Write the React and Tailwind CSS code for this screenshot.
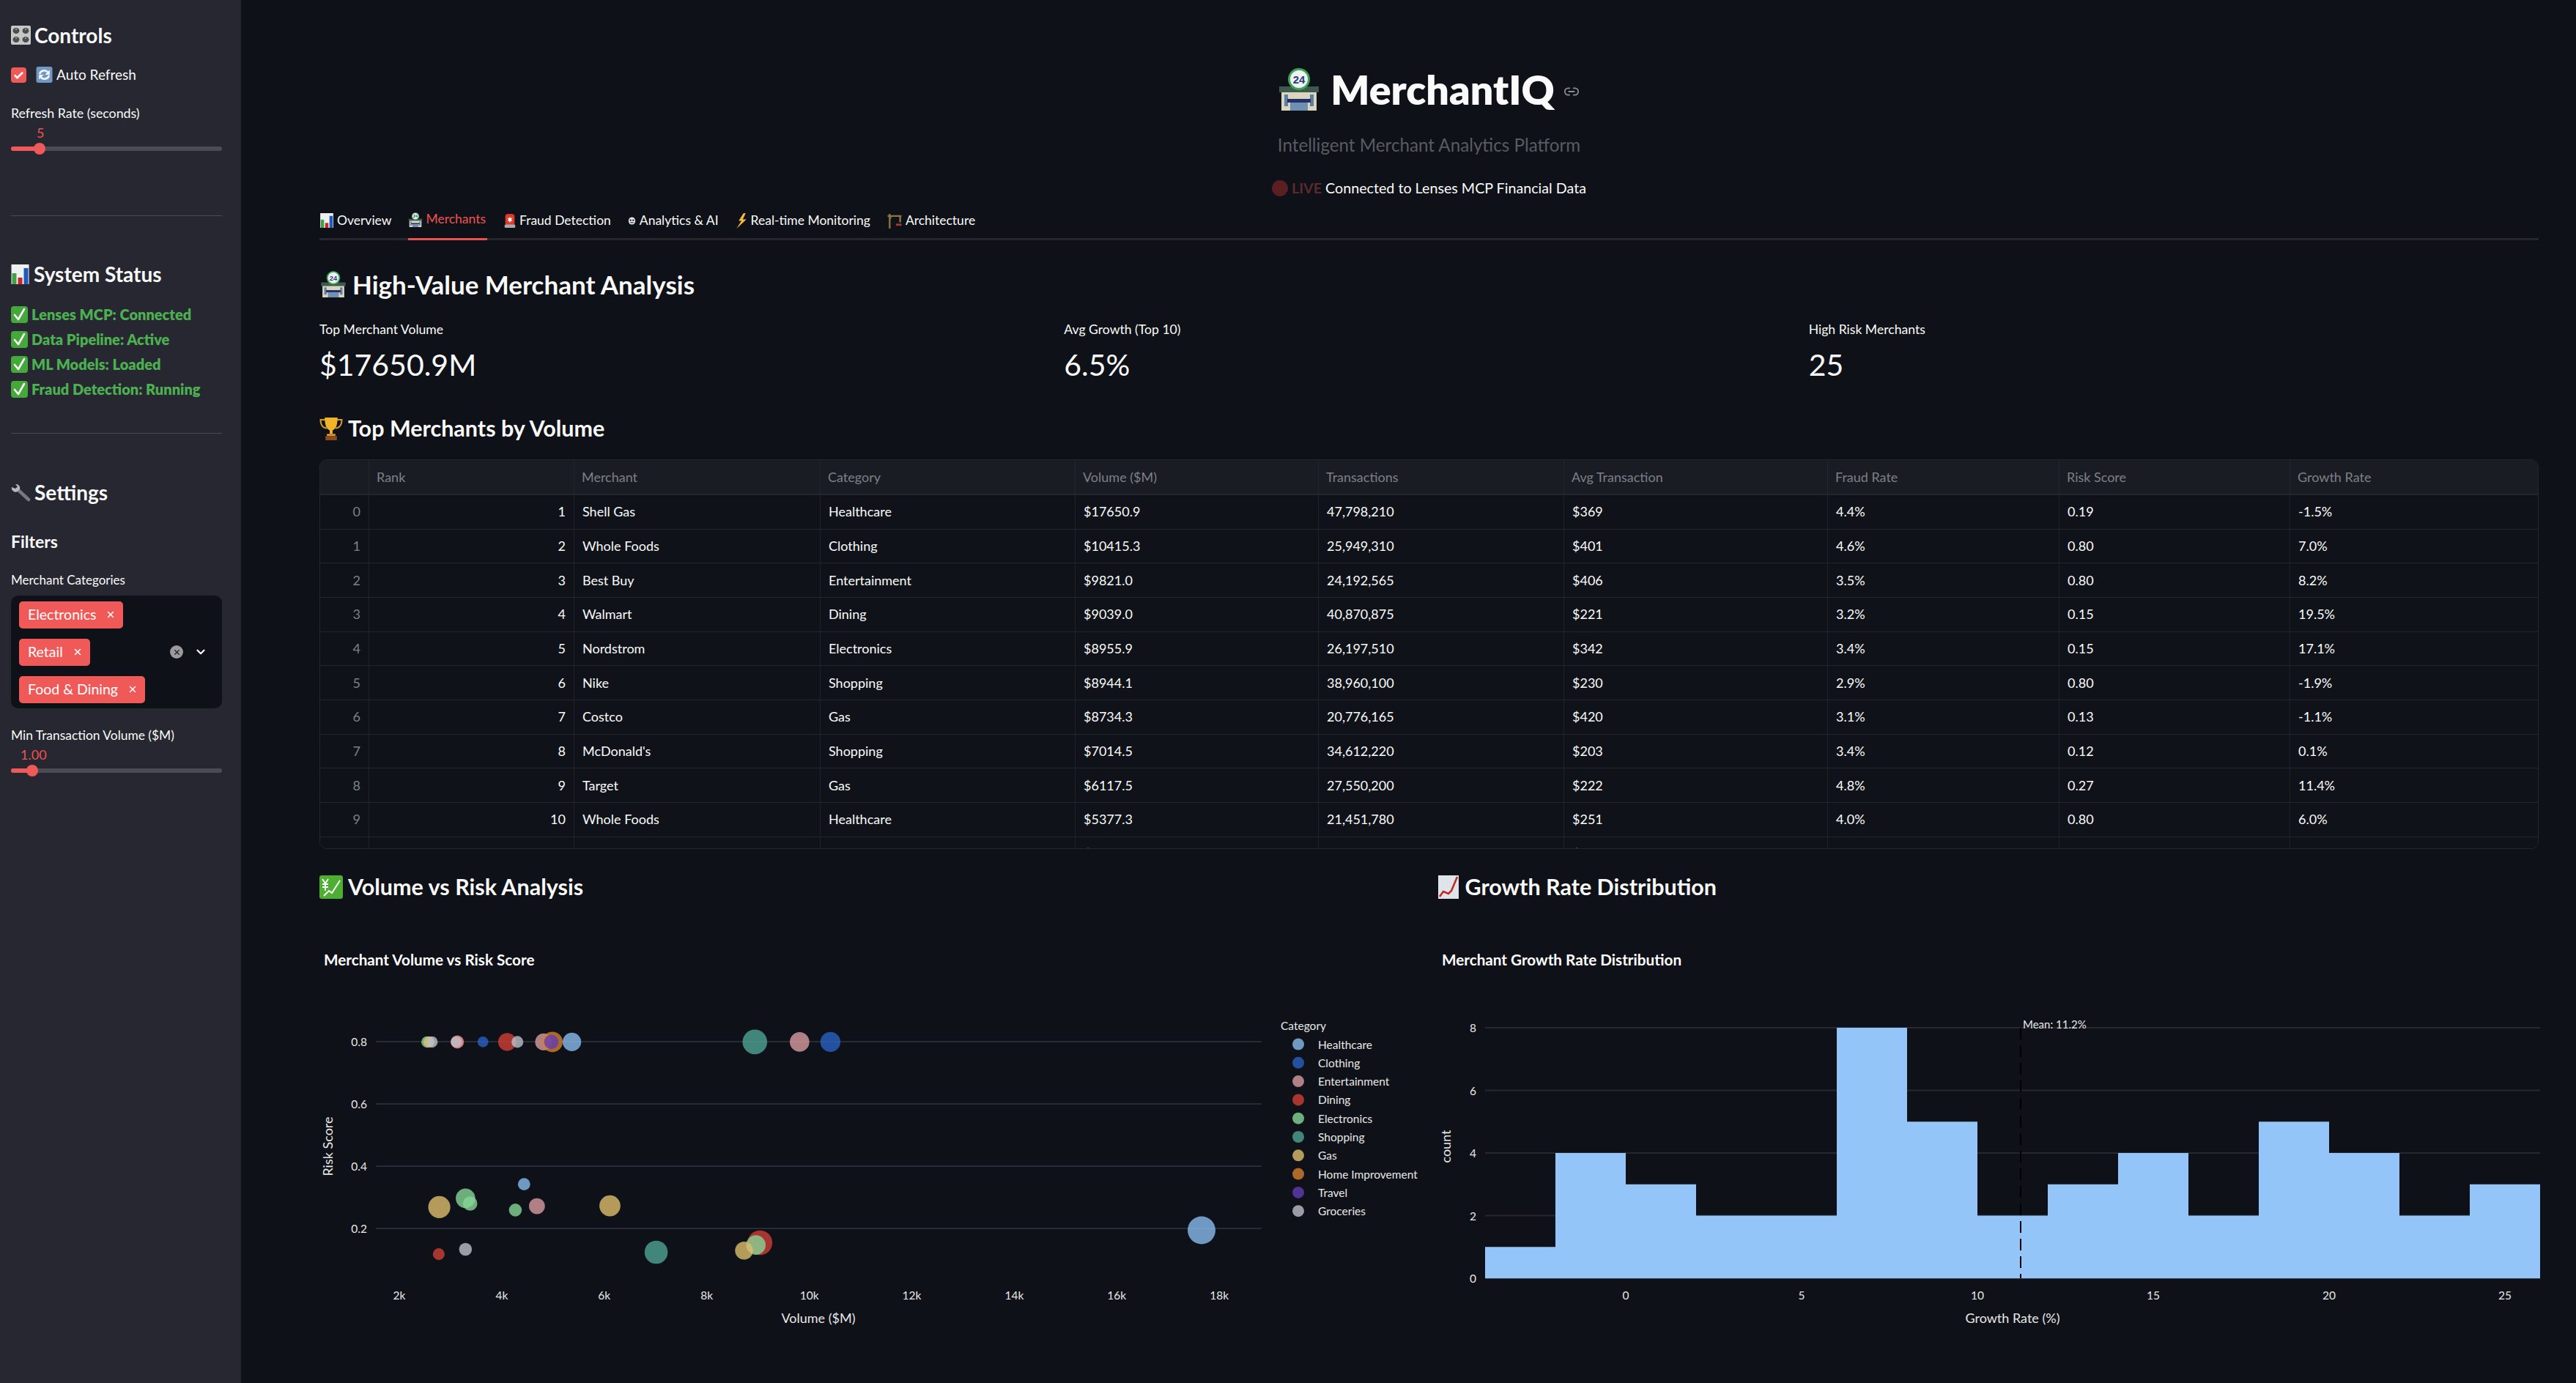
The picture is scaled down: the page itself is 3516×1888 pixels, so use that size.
import { Link2, X, ChevronDown } from "lucide-react";

const merchants = [
  ["0", "1", "Shell Gas", "Healthcare", "$17650.9", "47,798,210", "$369", "4.4%", "0.19", "-1.5%"],
  ["1", "2", "Whole Foods", "Clothing", "$10415.3", "25,949,310", "$401", "4.6%", "0.80", "7.0%"],
  ["2", "3", "Best Buy", "Entertainment", "$9821.0", "24,192,565", "$406", "3.5%", "0.80", "8.2%"],
  ["3", "4", "Walmart", "Dining", "$9039.0", "40,870,875", "$221", "3.2%", "0.15", "19.5%"],
  ["4", "5", "Nordstrom", "Electronics", "$8955.9", "26,197,510", "$342", "3.4%", "0.15", "17.1%"],
  ["5", "6", "Nike", "Shopping", "$8944.1", "38,960,100", "$230", "2.9%", "0.80", "-1.9%"],
  ["6", "7", "Costco", "Gas", "$8734.3", "20,776,165", "$420", "3.1%", "0.13", "-1.1%"],
  ["7", "8", "McDonald's", "Shopping", "$7014.5", "34,612,220", "$203", "3.4%", "0.12", "0.1%"],
  ["8", "9", "Target", "Gas", "$6117.5", "27,550,200", "$222", "4.8%", "0.27", "11.4%"],
  ["9", "10", "Whole Foods", "Healthcare", "$5377.3", "21,451,780", "$251", "4.0%", "0.80", "6.0%"],
  ["10", "11", "Netflix", "Home Improvement", "$4981.2", "18,325,160", "$272", "4.1%", "0.80", "13.8%"],
];

const columns = ["", "Rank", "Merchant", "Category", "Volume ($M)", "Transactions", "Avg Transaction", "Fraud Rate", "Risk Score", "Growth Rate"];
const rowGrid = "grid grid-cols-[67px_280px_336px_348px_332px_335px_360px_316px_315px_1fr]";

const palette = {
  Healthcare: "#88bbef",
  Clothing: "#2a61c2",
  Entertainment: "#d99ca0",
  Dining: "#d03e37",
  Electronics: "#87d596",
  Shopping: "#50a293",
  Gas: "#debd6d",
  "Home Improvement": "#d58030",
  Travel: "#623cb1",
  Groceries: "#bdc1ca",
};

// [category, x in zoom px, y in zoom px, width in zoom px]
const bubbles = [
  ["Electronics", 232, 543, 22],
  ["Gas", 236, 543, 22],
  ["Groceries", 242, 543, 22],
  ["Dining", 291, 543, 26],
  ["Entertainment", 291, 543, 25],
  ["Groceries", 289, 543, 21],
  ["Clothing", 341, 543, 21],
  ["Dining", 388, 543, 35],
  ["Groceries", 408, 543, 23],
  ["Entertainment", 459, 543, 33],
  ["Home Improvement", 476, 543, 40],
  ["Travel", 474, 543, 28],
  ["Healthcare", 514, 543, 36],
  ["Shopping", 870, 543, 48],
  ["Entertainment", 957, 543, 38],
  ["Clothing", 1017, 543, 39],
  ["Healthcare", 421, 978, 24],
  ["Electronics", 307, 1021, 38],
  ["Electronics", 316, 1037, 28],
  ["Gas", 256, 1048, 43],
  ["Electronics", 404, 1057, 25],
  ["Entertainment", 446, 1045, 31],
  ["Gas", 588, 1044, 41],
  ["Dining", 255, 1192, 23],
  ["Groceries", 307, 1177, 25],
  ["Shopping", 678, 1186, 45],
  ["Dining", 880, 1157, 48],
  ["Electronics", 872, 1164, 38],
  ["Gas", 849, 1181, 35],
];

const histogram = [1, 4, 3, 2, 2, 8, 5, 2, 3, 4, 2, 5, 4, 2, 3];

const ControlsIcon = () => (
  <svg viewBox="0 0 27 26" className="w-[27px] h-[26px] shrink-0">
    <rect width="27" height="26" rx="2" fill="#c4c8c4" />
    {[[7, 7], [20, 7], [7, 19], [20, 19]].map(([cx, cy]) => (
      <g key={`${cx}-${cy}`}>
        <ellipse cx={cx} cy={cy} rx="4.500" ry="4" fill="#4a4e4f" />
        <path d={`M${cx} ${cy - 3}v2`} stroke="#ddd" strokeWidth="1" />
      </g>
    ))}
  </svg>
);

const RefreshIcon = () => (
  <svg viewBox="0 0 24 24" className="w-[23px] h-[22px] shrink-0">
    <rect width="24" height="24" rx="3" fill="#7198c4" />
    <path d="M5 11a7 7 0 0 1 12-3" fill="none" stroke="#f4f6f9" strokeWidth="2.800" />
    <path d="M19 13a7 7 0 0 1-12 3" fill="none" stroke="#f4f6f9" strokeWidth="2.800" />
    <path d="M20 5v7h-7zM4 19v-7h7z" fill="#f4f6f9" />
  </svg>
);

const BarsIcon = ({ className }) => (
  <svg viewBox="0 0 24 27" className={className}>
    <rect width="24" height="27" fill="#eef0f2" />
    <rect x="1" y="12" width="6" height="15" fill="#43a047" />
    <rect x="9" y="18" width="6" height="9" fill="#c62828" />
    <rect x="17" y="5" width="6" height="22" fill="#1e5bb8" />
  </svg>
);

const CheckIcon = () => (
  <svg viewBox="0 0 23 23" className="w-[23px] h-[23px] shrink-0">
    <rect width="23" height="23" rx="4" fill="#45a83a" />
    <path d="M5 12l5 6 8-14" fill="none" stroke="#fff" strokeWidth="2.600" strokeLinecap="round" strokeLinejoin="round" />
  </svg>
);

const WrenchIcon = () => (
  <svg viewBox="0 0 27 25" className="w-[27px] h-[25px] shrink-0">
    <path d="M10 9l14 13" stroke="#77797c" strokeWidth="4.500" strokeLinecap="round" />
    <path d="M1 5a5.500 5.500 0 0 0 8 6l3-3a5.500 5.500 0 0 0-6-7L9 4.500 6 7z" fill="#b4b8bb" />
  </svg>
);

const StoreIcon = ({ className }) => (
  <svg viewBox="0 0 56 58" className={className}>
    <rect x="4" y="30" width="48" height="28" fill="#d9d5bf" />
    <rect x="8" y="36" width="5" height="16" fill="#5d7fa5" />
    <rect x="43" y="36" width="5" height="16" fill="#5d7fa5" />
    <rect x="1" y="25" width="54" height="8" fill="#3e5a4e" />
    <rect x="12" y="42" width="32" height="5" fill="#263064" />
    <rect x="16" y="47" width="24" height="11" fill="#6d90b3" />
    <ellipse cx="28" cy="15" rx="15" ry="15" fill="#3fa456" />
    <ellipse cx="28" cy="15" rx="12" ry="12" fill="#eef2f5" />
    <text x="28" y="21" textAnchor="middle" fontSize="15" fontWeight="700" fill="#2d3c75" fontFamily="Liberation Sans, sans-serif">24</text>
  </svg>
);

const SirenIcon = () => (
  <svg viewBox="0 0 16 22" className="w-[16px] h-[20px] shrink-0">
    <rect x="1" y="1" width="14" height="18" rx="4" fill="#d93a2b" />
    <rect y="17" width="16" height="5" rx="1.500" fill="#aaa" />
    <path d="M8 5l1 3 3-1-2 3 2 2-3-.5L8 15l-1-3.500L4 12l2-2-2-3 3 1z" fill="#fff" />
  </svg>
);

const RobotIcon = () => (
  <svg viewBox="0 0 12 14" className="w-[11px] h-[13px] shrink-0">
    <rect x="1" y="1.500" width="10" height="11" rx="5" fill="#e3e5e8" />
    <circle cx="4" cy="6" r="1.300" fill="#1a1c20" />
    <circle cx="8" cy="6" r="1.300" fill="#1a1c20" />
    <rect x="3.500" y="9" width="5" height="1.200" fill="#1a1c20" />
  </svg>
);

const BoltIcon = () => (
  <svg viewBox="0 0 16 22" className="w-[16px] h-[21px] shrink-0">
    <path d="M11 0L4 11h4L1 22l14-13h-5l4-9z" fill="#f6b93b" />
  </svg>
);

const CraneIcon = () => (
  <svg viewBox="0 0 20 22" className="w-[20px] h-[21px] shrink-0">
    <path d="M3 1v21M0 4h20M18 4v9" stroke="#8b7541" strokeWidth="2.500" fill="none" />
    <path d="M6 4l-3 5" stroke="#8b7541" strokeWidth="1.500" />
    <rect x="12" y="15" width="8" height="3" fill="#a2392f" />
  </svg>
);

const TrophyIcon = () => (
  <svg viewBox="0 0 32 32" className="w-[32px] h-[31px] shrink-0">
    <path d="M8 3H1c0 8 4 12 9 12M24 3h7c0 8-4 12-9 12" fill="none" stroke="#d99a1f" strokeWidth="2" />
    <path d="M7 0h18c0 10-2 16-7 18v5h-4v-5C9 16 7 10 7 0z" fill="#f0b429" />
    <rect x="10" y="23" width="12" height="3" fill="#d99a1f" />
    <rect x="8" y="26" width="16" height="6" fill="#8a4b20" />
  </svg>
);

const YenChartIcon = () => (
  <svg viewBox="0 0 32 32" className="w-[32px] h-[32px] shrink-0">
    <rect width="32" height="32" rx="3" fill="#4caf32" />
    <path d="M4 5l4 6 4-6M4 12h8M4 16h8M8 11v10" fill="none" stroke="#fff" strokeWidth="2" />
    <path d="M6 28l7-7 4 3 11-17" fill="none" stroke="#fff" strokeWidth="2" />
  </svg>
);

const TrendIcon = () => (
  <svg viewBox="0 0 28 32" className="w-[32px] h-[32px] shrink-0">
    <rect width="28" height="32" fill="#dfe4e8" />
    <path d="M2 29l5-7 7 3 4-4 8-19" fill="none" stroke="#c0281f" strokeWidth="2.500" />
  </svg>
);

const Slider = ({ value, valueClass, fillClass, thumbClass }) => (
  <>
    <div className={`h-[20px] flex items-center text-[18px] leading-none text-[#ef5350] ${valueClass}`}>{value}</div>
    <div className="relative mt-[9px] h-[6px] rounded-full bg-[#4a4b55]">
      <div className={`h-full rounded-full bg-[#ef5a58] ${fillClass}`} />
      <div className={`absolute top-[-5px] w-[16px] h-[16px] rounded-full bg-[#ef5a58] ${thumbClass}`} />
    </div>
  </>
);

const Chip = ({ label }) => (
  <div className="flex items-center justify-between w-fit h-[37px] pl-[12px] pr-[10px] gap-[13px] rounded-[5px] bg-[#ef5a58] text-white text-[19.500px]">
    <span>{label}</span>
    <X size={14} strokeWidth={2.5} />
  </div>
);

const Sidebar = () => (
  <aside className="w-[329px] shrink-0 bg-[#262730] pl-[15px] pr-[26px] pt-[28px] text-[#fafafa]">
    <div className="h-[40px] flex items-center gap-[5px] text-[28px] font-bold">
      <ControlsIcon />
      <span>Controls</span>
    </div>
    <div className="mt-[22px] h-[24px] flex items-center text-[19px]">
      <div className="w-[21px] h-[21px] rounded-[4px] bg-[#ef5a58] flex items-center justify-center">
        <svg viewBox="0 0 16 16" className="w-[15px] h-[15px]">
          <path d="M2 8l4 4 8-8" fill="none" stroke="#fff" strokeWidth="2.800" />
        </svg>
      </div>
      <span className="ml-[13px]"><RefreshIcon /></span>
      <span className="ml-[5px]">Auto Refresh</span>
    </div>
    <div className="mt-[28px] h-[24px] flex items-center text-[17.800px]">Refresh Rate (seconds)</div>
    <div className="mt-[5px]">
      <Slider value="5" valueClass="pl-[35px]" fillClass="w-[39px]" thumbClass="left-[31px]" />
    </div>
    <div className="mt-[88px] h-px bg-[#4a4b55]" />
    <div className="mt-[59px] h-[40px] flex items-center gap-[6px] text-[28px] font-bold">
      <BarsIcon className="w-[25px] h-[27px] shrink-0" />
      <span>System Status</span>
    </div>
    <div className="mt-[18px] flex flex-col text-[20px] font-extrabold text-[#4caf50]">
      {["Lenses MCP: Connected", "Data Pipeline: Active", "ML Models: Loaded", "Fraud Detection: Running"].map((line) => (
        <div key={line} className="h-[34px] flex items-center gap-[5px]">
          <CheckIcon />
          <span>{line}</span>
        </div>
      ))}
    </div>
    <div className="mt-[43px] h-px bg-[#4a4b55]" />
    <div className="mt-[60px] h-[40px] flex items-center gap-[5px] text-[28px] font-bold">
      <WrenchIcon />
      <span>Settings</span>
    </div>
    <div className="mt-[31px] h-[32px] flex items-center text-[23px] font-bold">Filters</div>
    <div className="mt-[25px] h-[24px] flex items-center text-[17px]">Merchant Categories</div>
    <div className="mt-[9px] h-[154px] rounded-[10px] bg-[#0e1117] flex items-center justify-between pl-[11px] pr-[20px]">
      <div className="flex flex-col gap-[14px]">
        <Chip label="Electronics" />
        <Chip label="Retail" />
        <Chip label="Food & Dining" />
      </div>
      <div className="flex items-center gap-[15px]">
        <div className="w-[18px] h-[18px] rounded-full bg-[#9b9b9d] flex items-center justify-center text-[#22242a]">
          <X size={11} strokeWidth={3} />
        </div>
        <ChevronDown size={18} strokeWidth={3} />
      </div>
    </div>
    <div className="mt-[25px] h-[24px] flex items-center text-[17.400px]">Min Transaction Volume ($M)</div>
    <div className="mt-[4px]">
      <Slider value="1.00" valueClass="pl-[13px]" fillClass="w-[29px]" thumbClass="left-[21px]" />
    </div>
  </aside>
);

const tabs = [
  [<BarsIcon key="i" className="w-[18px] h-[20px] shrink-0" />, "Overview"],
  [<StoreIcon key="i" className="w-[20px] h-[20px] shrink-0" />, "Merchants"],
  [<SirenIcon key="i" />, "Fraud Detection"],
  [<RobotIcon key="i" />, "Analytics & AI"],
  [<BoltIcon key="i" />, "Real-time Monitoring"],
  [<CraneIcon key="i" />, "Architecture"],
];

const Tabs = () => (
  <div className="h-[54px] flex gap-[22px] border-b-[3px] border-[#26272f] text-[17.500px] text-[#fafafa]">
    {tabs.map(([icon, label]) => (
      <div
        key={label}
        className={
          label === "Merchants"
            ? "h-[54px] flex items-center gap-[5px] border-b-[3px] border-[#e9534f] text-[#ef5350] pr-[2px]"
            : "h-[54px] flex items-center gap-[5px] pl-[1px]"
        }
      >
        {icon}
        <span>{label}</span>
      </div>
    ))}
  </div>
);

const Metric = ({ label, value }) => (
  <div>
    <div className="h-[24px] flex items-center text-[17.600px]">{label}</div>
    <div className="mt-[8px] h-[56px] flex items-center text-[41px]">{value}</div>
  </div>
);

const MerchantTable = () => (
  <div className="mt-[22px] h-[532px] overflow-hidden rounded-[10px] border border-[#24262e] text-[18px]">
    <div className={`${rowGrid} h-[48px] bg-[#1a1c24] text-[#7d8086] border-b-2 border-[#24262e]`}>
      {columns.map((name, i) => (
        <div key={i} className="flex items-center px-[10px] border-r border-[#24262e] last:border-r-0">{name}</div>
      ))}
    </div>
    {merchants.map((row) => (
      <div key={row[0]} className={`${rowGrid} h-[46.67px] bg-[#0f1319] border-b border-[#24262e]`}>
        {row.map((cell, i) => (
          <div
            key={i}
            className={`flex items-center px-[11px] border-r border-[#1f2229] last:border-r-0 ${
              i === 0 ? "justify-end text-[#7d8086]" : i === 1 ? "justify-end" : ""
            }`}
          >
            {cell}
          </div>
        ))}
      </div>
    ))}
  </div>
);

const SectionHeading = ({ icon, children, className = "text-[30.500px]" }) => (
  <div className={`h-[40px] flex items-center gap-[7px] font-bold ${className}`}>
    {icon}
    <span>{children}</span>
  </div>
);

const chartText = "fill-[#e8e8e8] text-[15.500px]";
const axisTitle = "fill-[#e8e8e8] text-[18px]";

const ScatterChart = () => (
  <svg viewBox="436 1250 1504 600" className="w-[1504px] h-[600px] block">
    <text x="442" y="1318" className="fill-white text-[20.700px] font-bold">Merchant Volume vs Risk Score</text>
    {[["0.8", 1422], ["0.6", 1507], ["0.4", 1592], ["0.2", 1677]].map(([label, y]) => (
      <g key={label}>
        <line x1="513" x2="1722" y1={y} y2={y} stroke="#2a2c35" strokeWidth="2" />
        <text x="501" y={y + 6} textAnchor="end" className={chartText}>{label}</text>
      </g>
    ))}
    {bubbles.map(([category, zx, zy, w], i) => (
      <circle
        key={i}
        cx={420 + zx / 1.4255}
        cy={1180 + zy / 2.24}
        r={w / 1.4255 / 2}
        fill={palette[category]}
        fillOpacity="0.8"
      />
    ))}
    <circle cx="1640" cy="1679.500" r="19" fill={palette.Healthcare} fillOpacity="0.8" />
    {["2k", "4k", "6k", "8k", "10k", "12k", "14k", "16k", "18k"].map((label, i) => (
      <text key={label} x={545 + i * 139.9} y="1774" textAnchor="middle" className={chartText}>{label}</text>
    ))}
    <text x="1117" y="1806" textAnchor="middle" className={axisTitle}>Volume ($M)</text>
    <text transform="translate(454 1565) rotate(-90)" textAnchor="middle" className={axisTitle}>Risk Score</text>
    <text x="1748" y="1406" className={chartText}>Category</text>
    {Object.keys(palette).map((name, i) => (
      <g key={name}>
        <circle cx="1772" cy={1425.5 + i * 25.3} r="8" fill={palette[name]} fillOpacity="0.8" />
        <text x="1799" y={1431.5 + i * 25.3} className={chartText}>{name}</text>
      </g>
    ))}
  </svg>
);

const HistogramChart = () => (
  <svg viewBox="1960 1250 1506 600" className="w-[1506px] h-[600px] block">
    <text x="1967" y="1318" className="fill-white text-[20.700px] font-bold">Merchant Growth Rate Distribution</text>
    {[[8, 1403], [6, 1488.5], [4, 1574], [2, 1659.5], [0, 1745]].map(([label, y]) => (
      <g key={label}>
        <line x1="2026" x2="3466" y1={y} y2={y} stroke={label === 0 ? "#3a3d46" : "#26282e"} strokeWidth="2" />
        <text x="2014" y={y + 6} textAnchor="end" className={chartText}>{label}</text>
      </g>
    ))}
    {histogram.map((count, i) => (
      <rect key={i} x={2026 + i * 96} y={1745 - count * 42.75} width="96" height={count * 42.75} fill="#93c5f8" />
    ))}
    <line x1="2757" x2="2757" y1="1403" y2="1745" stroke="#000" strokeWidth="2" strokeDasharray="16 8" />
    <text x="2760" y="1404" className="fill-[#e8e8e8] text-[15px]">Mean: 11.2%</text>
    {[0, 5, 10, 15, 20, 25].map((label, i) => (
      <text key={label} x={2218 + i * 240} y="1774" textAnchor="middle" className={chartText}>{label}</text>
    ))}
    <text x="2746" y="1806" textAnchor="middle" className={axisTitle}>Growth Rate (%)</text>
    <text transform="translate(1979 1565) rotate(-90)" textAnchor="middle" className={axisTitle}>count</text>
  </svg>
);

export default function App() {
  return (
    <div className="flex h-[1888px] overflow-hidden bg-[#0e1117] font-['Lato',sans-serif] text-[#fafafa]">
      <Sidebar />
      <main className="flex-1 min-w-0 pl-[107px] pr-[51px] pt-[92px]">
        {/* Header */}
        <div className="h-[60px] flex items-center justify-center gap-[15px] text-[55.500px] font-extrabold">
          <StoreIcon className="w-[56px] h-[58px] shrink-0" />
          <span>MerchantIQ</span>
          <Link2 size={22} strokeWidth={2} className="text-[#8a8d92] -ml-[3px] mt-[6px]" />
        </div>
        <div className="mt-[28px] h-[36px] flex items-center justify-center text-[24.200px] text-[#585c62]">
          Intelligent Merchant Analytics Platform
        </div>
        <div className="mt-[23px] h-[36px] flex items-center justify-center gap-[5px] text-[19.700px]">
          <span className="w-[22px] h-[22px] rounded-full bg-[#5a1f20]" />
          <span className="font-bold text-[#5c2a2d]">LIVE</span>
          <span>Connected to Lenses MCP Financial Data</span>
        </div>
        <div className="-mt-[1px]">
          <Tabs />
        </div>

        <div className="mt-[40px]">
          <SectionHeading icon={<StoreIcon className="w-[38px] h-[36px] shrink-0" />} className="text-[35px]">
            High-Value Merchant Analysis
          </SectionHeading>
        </div>
        <div className="mt-[30px] grid grid-cols-3 gap-[20px]">
          <Metric label="Top Merchant Volume" value="$17650.9M" />
          <Metric label="Avg Growth (Top 10)" value="6.5%" />
          <Metric label="High Risk Merchants" value="25" />
        </div>
        <div className="mt-[39px]">
          <SectionHeading icon={<TrophyIcon />}>Top Merchants by Volume</SectionHeading>
        </div>
        <MerchantTable />

        {/* Charts */}
        <div className="mt-[32px] grid grid-cols-2 gap-[20px]">
          <div>
            <SectionHeading icon={<YenChartIcon />}>Volume vs Risk Analysis</SectionHeading>
            <div className="mt-[19px]"><ScatterChart /></div>
          </div>
          <div>
            <SectionHeading icon={<TrendIcon />}>Growth Rate Distribution</SectionHeading>
            <div className="mt-[19px]"><HistogramChart /></div>
          </div>
        </div>
      </main>
    </div>
  );
}
